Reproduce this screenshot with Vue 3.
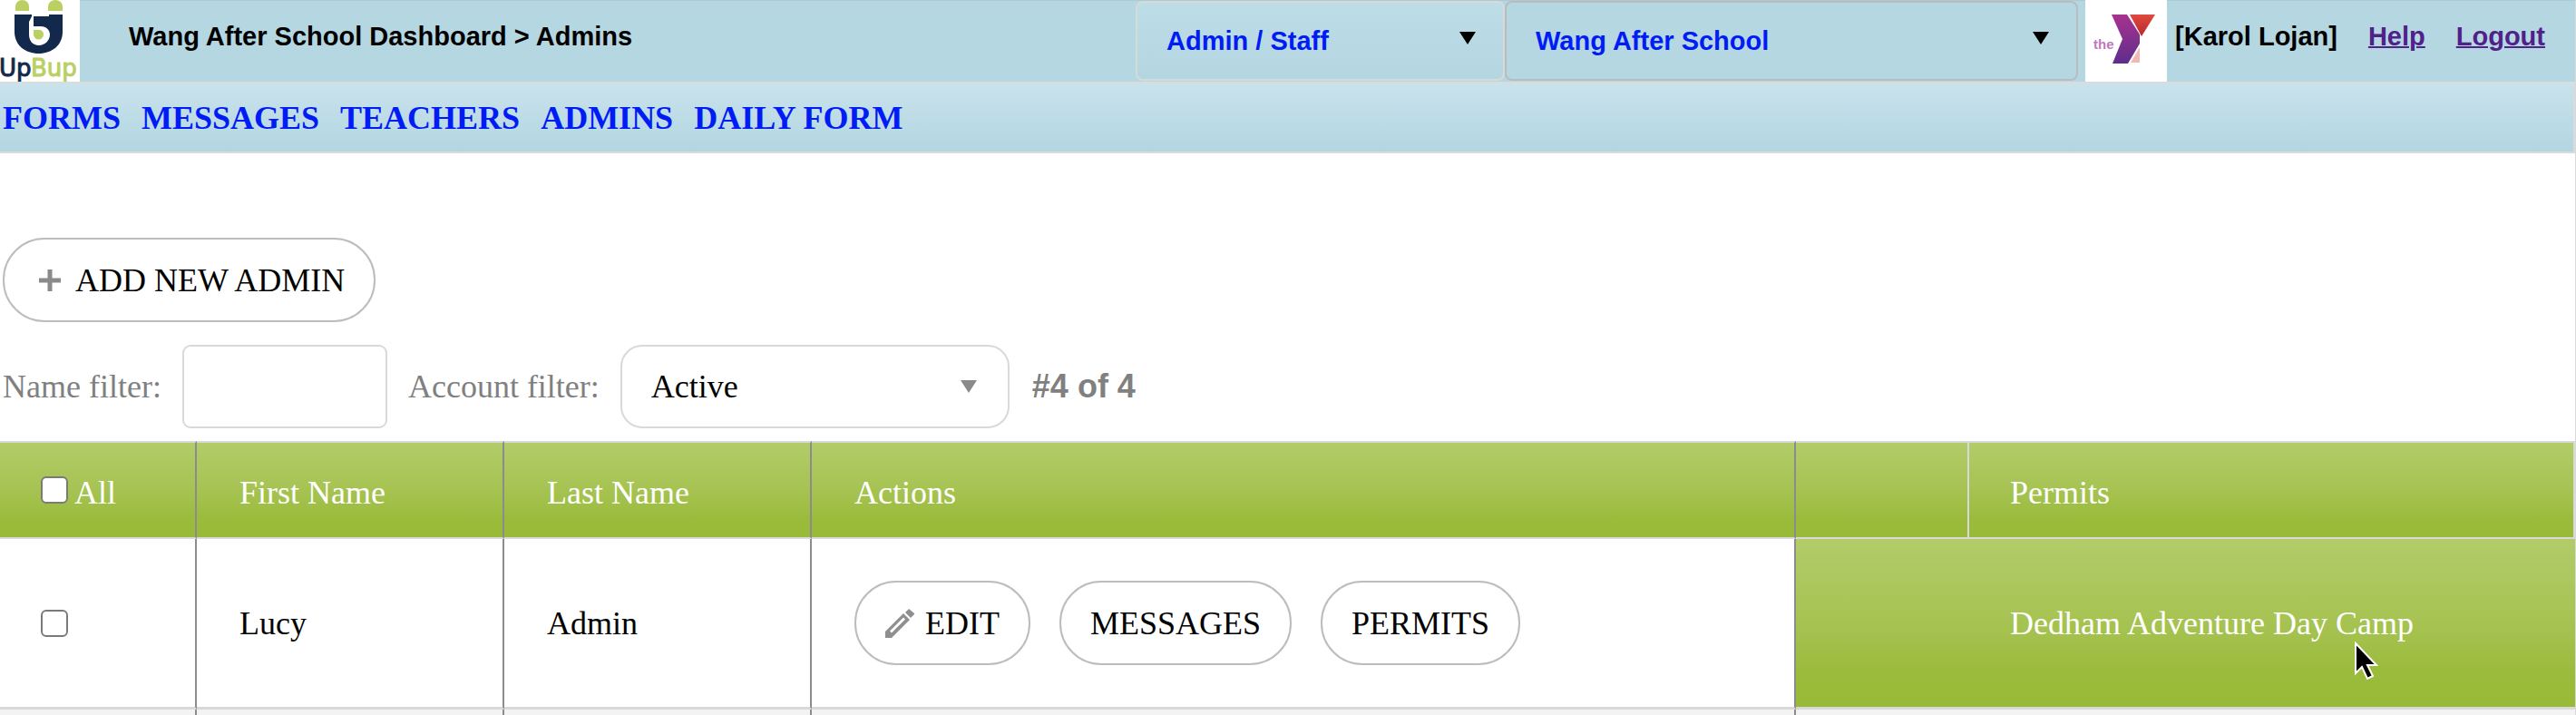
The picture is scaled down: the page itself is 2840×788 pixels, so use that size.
<script setup>
import { ref } from 'vue'

const navLinks = ['FORMS', 'MESSAGES', 'TEACHERS', 'ADMINS', 'DAILY FORM']
const role = ref('Admin / Staff')
const site = ref('Wang After School')
const nameFilter = ref('')
const accountFilter = ref('Active')
const admins = [
  { id: 1, first: 'Lucy', last: 'Admin', permits: 'Dedham Adventure Day Camp' }
]
</script>

<template>
  <div class="page">
    <header class="topbar">
      <svg class="logo" viewBox="0 0 88 90" role="img" aria-label="UpBup">
        <rect width="88" height="90" fill="#fff" />
        <path d="M17 12V7a7.500 7 0 0 1 15 0v5zM53 12V7a8 7 0 0 1 16 0v5z" fill="#bad063" />
        <path d="M16 16H69V35C69 50 57 59 42.500 59S16 50 16 35z" fill="#13294b" />
        <path d="M35 15H54V18H37V29H45C51 29 55 33 55 38C55 45 49 50 43 50C36 50 32 45 32 38V24L35 18z" fill="#fff" />
        <path d="M37 18H54V29H37z" fill="#13294b" />
        <path d="M37 33H43C46 33 48 35 48 38A5.500 5.500 0 0 1 37 38z" fill="#bad063" />
        <text class="logo-text" x="-1" y="84" fill="#13294b" stroke="#13294b">Up</text>
        <text class="logo-text" x="34" y="84" fill="#bad063" stroke="#bad063">Bup</text>
      </svg>
      <h1 class="title">Wang After School Dashboard &gt; Admins</h1>

      <div class="select-wrap role">
        <select v-model="role" class="top-select light" aria-label="Role">
          <option>Admin / Staff</option>
        </select>
        <svg class="arrow" viewBox="0 0 18 14"><path d="M0 0H18L9 14z" /></svg>
      </div>
      <div class="select-wrap site">
        <select v-model="site" class="top-select" aria-label="Site">
          <option>Wang After School</option>
        </select>
        <svg class="arrow" viewBox="0 0 18 14"><path d="M0 0H18L9 14z" /></svg>
      </div>

      <svg class="ymca" viewBox="0 0 90 90" role="img" aria-label="the Y">
        <defs>
          <linearGradient id="purple" x1="0" y1="0" x2="0" y2="1">
            <stop offset="0" stop-color="#a8328f" />
            <stop offset="1" stop-color="#5e2d8c" />
          </linearGradient>
          <linearGradient id="red" x1="0" y1="0" x2="0" y2="1">
            <stop offset="0" stop-color="#e2483f" />
            <stop offset="1" stop-color="#b52a2c" />
          </linearGradient>
        </defs>
        <rect width="90" height="90" fill="#fff" />
        <path d="M60 52V69H50z" fill="#f0b9b4" />
        <path d="M29 16H46L60 38V48L47 70H30L41 43z" fill="url(#purple)" />
        <path d="M49 16H77L62 40z" fill="url(#red)" />
        <text class="the" x="9" y="54" fill="#c07abb">the</text>
      </svg>
      <span class="user">[Karol Lojan]</span>
      <a class="top-link" href="#help">Help</a>
      <a class="top-link" href="#logout">Logout</a>
    </header>

    <nav class="nav">
      <a v-for="link in navLinks" :key="link" href="#">{{ link }}</a>
    </nav>

    <main>
      <button type="button" class="pill add">
        <svg class="plus" viewBox="0 0 24 24"><path d="M12 0V24M0 12H24" stroke="#8a8a8a" stroke-width="5" /></svg>
        ADD NEW ADMIN
      </button>

      <div class="filters">
        <label for="name-filter">Name filter:</label>
        <input id="name-filter" v-model="nameFilter" class="name-input" type="text" />
        <label for="account-filter">Account filter:</label>
        <div class="select-wrap account">
          <select id="account-filter" v-model="accountFilter" class="account-select">
            <option>Active</option>
          </select>
          <svg class="arrow" viewBox="0 0 18 14"><path d="M0 0H18L9 14z" /></svg>
        </div>
        <span class="count">#4 of 4</span>
      </div>

      <table class="grid">
        <colgroup>
          <col class="c-check" />
          <col class="c-name" />
          <col class="c-name" />
          <col class="c-actions" />
          <col class="c-gap" />
          <col />
        </colgroup>
        <thead>
          <tr>
            <th>
              <label class="all"><input type="checkbox" class="check" />All</label>
            </th>
            <th>First Name</th>
            <th>Last Name</th>
            <th>Actions</th>
            <th class="pale"></th>
            <th class="pale">Permits</th>
          </tr>
        </thead>
        <tbody>
          <tr v-for="admin in admins" :key="admin.id" class="row">
            <td><input type="checkbox" class="check" :aria-label="'Select ' + admin.first" /></td>
            <td>{{ admin.first }}</td>
            <td>{{ admin.last }}</td>
            <td>
              <div class="actions">
                <button type="button" class="pill">
                  <svg class="pencil" viewBox="0 0 32 32">
                    <path d="M0 32V25L20 5L27 12L7 32z" fill="#8f8f8f" />
                    <path d="M5 24.500L20 9.500L22 11.500L7 26.500z" fill="#fff" />
                    <path d="M22 4L26 0L32 5V6L28 10z" fill="#8f8f8f" />
                  </svg>EDIT
                </button>
                <button type="button" class="pill">MESSAGES</button>
                <button type="button" class="pill">PERMITS</button>
              </div>
            </td>
            <td class="green"></td>
            <td class="green">
              <span class="permit">{{ admin.permits }}
                <svg class="cursor" viewBox="0 0 28 44">
                  <path d="M2 2V35L9 28L15 41L21 38L15 26H25z" fill="#000" stroke="#fff" stroke-width="2" />
                </svg>
              </span>
            </td>
          </tr>
          <tr class="next">
            <td v-for="n in 6" :key="n"></td>
          </tr>
        </tbody>
      </table>
    </main>
  </div>
</template>

<style>
body {
  margin: 0;
  background: #fff;
}
</style>

<style scoped>
.page {
  box-sizing: border-box;
  border-right: 1px solid #d9d9d9;
  font-family: "Liberation Serif", "Times New Roman", serif;
  font-size: 36px;
  line-height: 42px;
  color: #000;
}
.page *,
.page *::before {
  box-sizing: border-box;
}
.topbar {
  display: flex;
  height: 90px;
  padding-right: 33px;
  background: #b5d7e2;
  box-shadow: inset 0 1px #aec9d1;
  font: bold 29px/80px "Liberation Sans", Arial, sans-serif;
  white-space: nowrap;
}
.logo {
  flex: none;
  width: 88px;
  height: 90px;
}
.logo-text {
  font: 26px "DejaVu Sans", sans-serif;
  stroke-width: 1px;
}
.the {
  font: bold 15px "Liberation Sans", sans-serif;
}
.title {
  margin: 0 auto 0 54px;
  font: inherit;
}
.select-wrap {
  position: relative;
  flex: none;
}
.role {
  width: 407px;
  padding: 1px 0;
}
.site {
  width: 632px;
  padding: 1px 0;
}
.select-wrap select {
  width: 100%;
  height: 100%;
  margin: 0;
  appearance: none;
}
.top-select {
  display: block;
  padding: 0 32px;
  border: 2px solid #b9bcbd;
  border-radius: 8px;
  background: #b5d7e2;
  color: #001cf5;
  font: bold 29px "Liberation Sans", Arial, sans-serif;
}
.top-select.light {
  border-color: #d6dadb;
  background: linear-gradient(#bddde7, #b4d6e1);
}
.arrow {
  position: absolute;
  top: 35px;
  right: 32px;
  width: 18px;
  height: 14px;
  pointer-events: none;
}
.ymca {
  flex: none;
  width: 90px;
  height: 90px;
  margin-left: 8px;
}
.user {
  margin-left: 9px;
}
.top-link {
  margin-left: 34px;
  color: #4f2189;
  text-decoration-thickness: 2px;
}
.nav {
  display: flex;
  align-items: center;
  gap: 23px;
  height: 79px;
  padding-left: 3px;
  border: 2px solid #d9dcdd;
  border-left: 0;
  background: linear-gradient(#c9e2ec, #b3d6e1);
  font-weight: bold;
}
.nav a {
  color: #001cf5;
  text-decoration: none;
}
.pill {
  display: flex;
  align-items: center;
  height: 93px;
  margin: 0;
  padding: 0 32px;
  border: 2px solid #bdbdbd;
  border-radius: 46px;
  background: #fff;
  color: #000;
  font: 36px/42px "Liberation Serif", "Times New Roman", serif;
  white-space: nowrap;
}
.add {
  margin: 93px 0 0 3px;
  padding-left: 38px;
}
.plus {
  width: 24px;
  height: 24px;
  margin-right: 16px;
}
.pencil {
  width: 32px;
  height: 32px;
  margin-right: 12px;
}
.filters {
  display: flex;
  align-items: center;
  padding: 25px 0 14px 3px;
  color: #808080;
}
.name-input {
  width: 226px;
  height: 92px;
  margin: 0 23px;
  padding: 0 16px;
  border: 2px solid #d9d9d9;
  border-radius: 9px;
  background: #fff;
  font: inherit;
}
.account {
  width: 429px;
  height: 92px;
  margin: 0 25px 0 23px;
}
.account-select {
  padding: 0 32px;
  border: 2px solid #d9d9d9;
  border-radius: 24px;
  background: #fff;
  color: #000;
  font: inherit;
}
.account .arrow {
  top: 39px;
  right: 36px;
  fill: #8a8a8a;
}
.count {
  font: bold 36px/42px "Liberation Sans", Arial, sans-serif;
}
.grid {
  width: 100%;
  table-layout: fixed;
  border-spacing: 0;
}
.c-check {
  width: 217px;
}
.c-name {
  width: 339px;
}
.c-actions {
  width: 1085px;
}
.c-gap {
  width: 191px;
}
.grid th,
.grid td {
  padding: 0 47px;
  border-right: 2px solid #8c8c8c;
  text-align: left;
  font-weight: normal;
}
.grid th {
  height: 108px;
  padding-top: 6px;
  border-top: 2px solid #d9d9d9;
  border-bottom: 2px solid #d9d9d9;
  background: linear-gradient(#b2cc69, #a6c352 50%, #9bbb3c 80%, #99b938);
  color: #fff;
}
.grid th:first-child,
.grid td:first-child {
  padding-left: 45px;
}
.grid th:last-child,
.grid td:last-child {
  padding-left: 45px;
}
.grid th.pale {
  border-right-color: #d9d9d9;
}
.row td {
  height: 188px;
  border-bottom: 3px solid #d9d9d9;
}
.row td.green {
  border-right: 0;
  background: linear-gradient(#b2cc69, #a6c352 50%, #9bbb3c 80%, #99b938);
  color: #fff;
}
.next td {
  height: 6px;
  background: #f3f3f3;
}
.next td:nth-child(n + 5) {
  border-right: 0;
}
.all {
  display: flex;
  align-items: center;
}
.check {
  display: block;
  width: 30px;
  height: 30px;
  margin: 0;
  border: 2px solid #7a7a7a;
  border-radius: 6px;
  background: #fff;
  appearance: none;
}
.all .check {
  margin: 0 7px 6px 0;
}
.actions {
  display: flex;
  gap: 32px;
}
.permit {
  position: relative;
}
.cursor {
  position: absolute;
  right: 38px;
  top: 40px;
  width: 28px;
  height: 44px;
}
</style>
